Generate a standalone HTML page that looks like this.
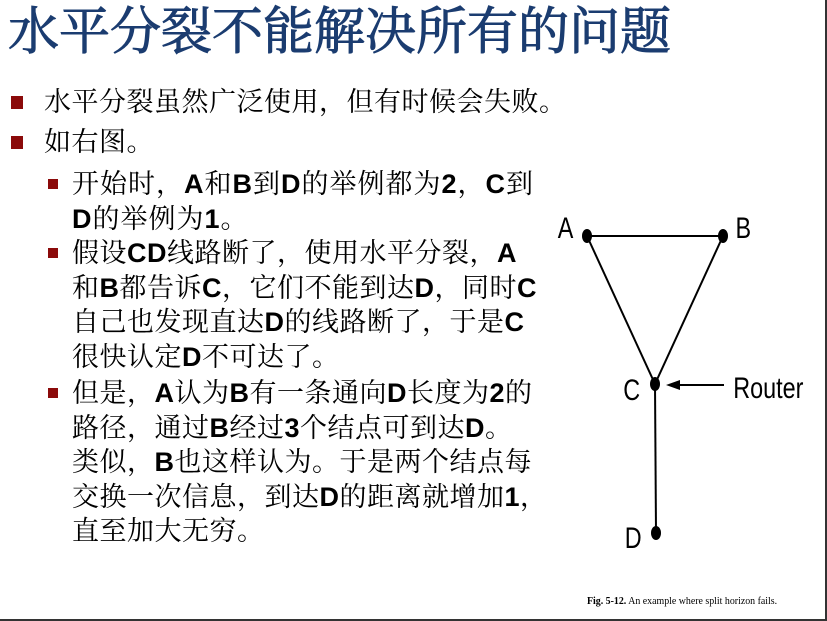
<!DOCTYPE html>
<html><head><meta charset="utf-8"><style>
body{margin:0;width:827px;height:621px;background:#fff;position:relative;overflow:hidden;font-family:"Liberation Serif","Noto Serif CJK SC",serif;}
.t{position:absolute;left:8px;top:0px;font-size:51px;line-height:66px;color:#1b3c70;font-family:"Liberation Serif","Noto Serif CJK SC",serif;white-space:nowrap;-webkit-text-stroke:1px #1b3c70}
.l{position:absolute;font-size:27px;color:#000;white-space:nowrap;line-height:34.5px;letter-spacing:0.5px}
.s{letter-spacing:1px}
.b{position:absolute;background:#8b0a0a}
b{font-family:"Liberation Sans",sans-serif;font-weight:bold}
</style></head><body>
<div class="t">水平分裂不能解决所有的问题</div>
<div class="b" style="left:11px;top:96px;width:12px;height:13px"></div>
<div class="l" style="left:44px;top:85px">水平分裂虽然广泛使用，但有时候会失败。</div>
<div class="b" style="left:11px;top:136px;width:12px;height:13px"></div>
<div class="l" style="left:44px;top:125px">如右图。</div>
<div class="b" style="left:48px;top:179px;width:10px;height:10px"></div>
<div class="l s" style="left:72px;top:167px">开始时，<b>A</b>和<b>B</b>到<b>D</b>的举例都为<b>2</b>，<b>C</b>到<br><b>D</b>的举例为<b>1</b>。</div>
<div class="b" style="left:48px;top:248px;width:10px;height:10px"></div>
<div class="l" style="left:72px;top:236px">假设<b>CD</b>线路断了，使用水平分裂，<b>A</b><br>和<b>B</b>都告诉<b>C</b>，它们不能到达<b>D</b>，同时<b>C</b><br>自己也发现直达<b>D</b>的线路断了，于是<b>C</b><br>很快认定<b>D</b>不可达了。</div>
<div class="b" style="left:48px;top:388px;width:10px;height:10px"></div>
<div class="l" style="left:72px;top:376px">但是，<b>A</b>认为<b>B</b>有一条通向<b>D</b>长度为<b>2</b>的<br>路径，通过<b>B</b>经过<b>3</b>个结点可到达<b>D</b>。<br>类似，<b>B</b>也这样认为。于是两个结点每<br>交换一次信息，到达<b>D</b>的距离就增加<b>1</b>，<br>直至加大无穷。</div>
<svg style="position:absolute;left:0;top:0" width="827" height="621">
<g stroke="#000" stroke-width="2" fill="none">
<line x1="587" y1="236" x2="723" y2="236"/>
<line x1="587" y1="236" x2="655" y2="384"/>
<line x1="723" y1="236" x2="655" y2="384"/>
<line x1="655" y1="384" x2="656" y2="533"/>
<line x1="676" y1="385" x2="724" y2="385"/>
</g>
<polygon points="666,385 680,380 680,390" fill="#000"/>
<g fill="#000"><ellipse cx="587" cy="236" rx="5" ry="7"/><ellipse cx="723" cy="236" rx="5" ry="7"/><ellipse cx="655" cy="384" rx="5" ry="7"/><ellipse cx="656" cy="533" rx="5" ry="7"/></g>
<g font-family="Liberation Sans,sans-serif" font-size="30" transform="scale(0.78,1)">
<text x="715" y="238">A</text><text x="943" y="238">B</text><text x="799" y="400">C</text><text x="940" y="398">Router</text><text x="801" y="548">D</text>
</g>
<text x="587" y="604" font-size="11" font-family="Liberation Serif,serif" transform="translate(587 0) scale(0.9,1) translate(-587 0)"><tspan font-weight="bold">Fig.  5-12.</tspan> An example where split horizon fails.</text>
<line x1="826" y1="0" x2="826" y2="621" stroke="#333" stroke-width="2"/>
<line x1="0" y1="620" x2="827" y2="620" stroke="#333" stroke-width="2"/>
</svg>
</body></html>
